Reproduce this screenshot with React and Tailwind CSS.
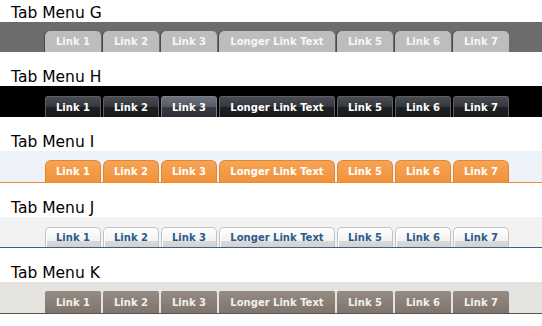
import React from 'react'

const links = ['Link 1', 'Link 2', 'Link 3', 'Longer Link Text', 'Link 5', 'Link 6', 'Link 7']

const menus = [
  {
    title: 'Tab Menu G',
    bar: 'h-[30px] bg-[#6c6c6c]',
    tab: 'h-[21px] rounded-t-[5px] bg-[#bdbdbd] text-[#f6f6f6] shadow-[-1px_0_0_#4a4a4a]',
  },
  {
    title: 'Tab Menu H',
    bar: 'h-[31px] bg-black',
    tab: 'h-[21px] rounded-t-[3px] border border-b-0 border-[#5c5e64] bg-[linear-gradient(#4a4c53,#34363c_50%,#202127_50%,#17181c)] text-white',
    active: 'h-[21px] rounded-t-[3px] border border-b-0 border-[#7a7e88] bg-[linear-gradient(#6e727d,#555963_50%,#383b43_50%,#2a2c33)] text-white',
  },
  {
    title: 'Tab Menu I',
    bar: 'h-[32px] bg-[#edf2f9] border-b border-[#ee8a2c]',
    tab: 'h-[22px] rounded-t-[6px] border border-b-0 border-[#e5852c] bg-[linear-gradient(#f5a456,#f2923a)] text-white',
  },
  {
    title: 'Tab Menu J',
    bar: 'h-[31px] bg-[#f2f2f2] border-b border-[#3d5f86]',
    tab: 'h-[20px] rounded-t-[5px] border border-b-0 border-[#c2c2c2] shadow-[inset_1px_1px_0_#ffffff] bg-[linear-gradient(#ffffff,#f1f1f1_70%,#d9d9d9_70%,#d3d3d3)] text-[#2c5a88]',
  },
  {
    title: 'Tab Menu K',
    bar: 'h-[32px] bg-[#e5e3df] border-b border-[#555555]',
    tab: 'h-[22px] rounded-t-[2px] bg-[linear-gradient(#958b83,#7e746c)] text-[#f4efea]',
  },
]

const TabMenu = ({ title, bar, tab, active, first }) => (
  <div className={first ? '' : 'mt-3'}>
    <div className="h-[22px] pt-[4px] pl-[11px] text-[15.5px] leading-[18px] text-black">{title}</div>
    <div className={`flex items-end pl-[45px] gap-[2px] ${bar}`}>
      {links.map((label, i) => (
        <div
          key={label}
          className={`flex items-center justify-center text-[10px] font-bold ${label.startsWith('Longer') ? 'w-[116px]' : 'w-[56px]'} ${active && i === 2 ? active : tab}`}
        >
          {label}
        </div>
      ))}
    </div>
  </div>
)

export default function App() {
  return (
    <div className="w-[542px] h-[326px] bg-white overflow-hidden font-['DejaVu_Sans',sans-serif]">
      {menus.map((m, i) => (
        <TabMenu key={m.title} {...m} first={i === 0} />
      ))}
    </div>
  )
}
